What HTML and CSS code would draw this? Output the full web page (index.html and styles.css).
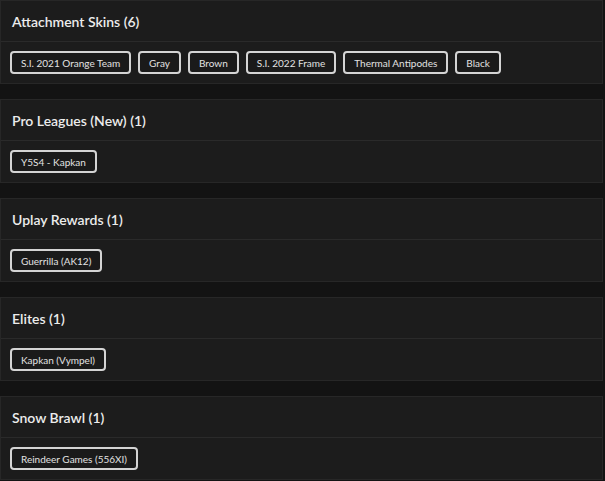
FILE: index.html
```html
<!DOCTYPE html>
<html>
<head>
<meta charset="utf-8">
<link rel="stylesheet" href="styles.css">
</head>
<body>
<div class="list">
  <section class="card">
    <div class="card-head">Attachment Skins (6)</div>
    <div class="card-body">
      <span class="chip">S.I. 2021 Orange Team</span>
      <span class="chip">Gray</span>
      <span class="chip">Brown</span>
      <span class="chip">S.I. 2022 Frame</span>
      <span class="chip">Thermal Antipodes</span>
      <span class="chip">Black</span>
    </div>
  </section>
  <section class="card">
    <div class="card-head">Pro Leagues (New) (1)</div>
    <div class="card-body">
      <span class="chip">Y5S4 - Kapkan</span>
    </div>
  </section>
  <section class="card">
    <div class="card-head">Uplay Rewards (1)</div>
    <div class="card-body">
      <span class="chip">Guerrilla (AK12)</span>
    </div>
  </section>
  <section class="card">
    <div class="card-head">Elites (1)</div>
    <div class="card-body">
      <span class="chip">Kapkan (Vympel)</span>
    </div>
  </section>
  <section class="card">
    <div class="card-head">Snow Brawl (1)</div>
    <div class="card-body">
      <span class="chip">Reindeer Games (556XI)</span>
    </div>
  </section>
</div>
</body>
</html>
```

FILE: styles.css
```css
html, body {
  margin: 0;
  padding: 0;
  background: #131313;
}
body {
  font-family: "Lato", "Liberation Sans", sans-serif;
  color: #e6e6e6;
}
.list {
  display: flex;
  flex-direction: column;
  gap: 15px;
  width: 603px;
}
.card {
  background: #1c1c1c;
  border: 1px solid #272727;
}
.card-head {
  height: 40px;
  display: flex;
  align-items: center;
  padding: 0 11px;
  font-size: 14px;
  font-weight: 600;
  color: #ececec;
  border-bottom: 1px solid #2a2a2a;
}
.card-body {
  display: flex;
  flex-wrap: wrap;
  gap: 7px;
  padding: 9px 9px;
}
.chip {
  display: inline-flex;
  align-items: center;
  height: 19px;
  padding: 0 9px;
  border: 2px solid #d4d4d4;
  border-radius: 4px;
  background: #1a1a1a;
  font-size: 10px;
  color: #e2e2e2;
  white-space: nowrap;
}
```
